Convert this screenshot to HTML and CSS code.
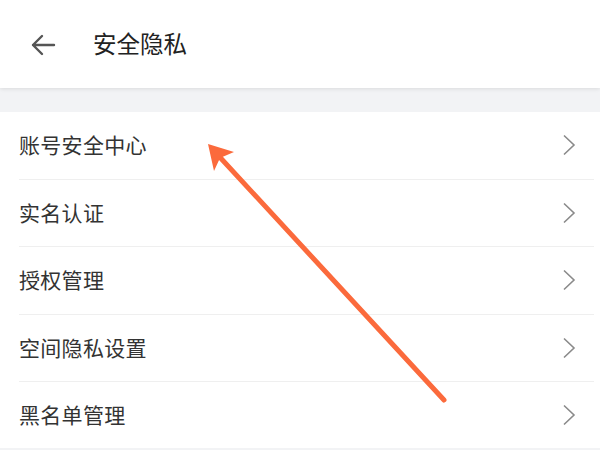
FILE: index.html
```html
<!DOCTYPE html>
<html lang="zh">
<head>
<meta charset="utf-8">
<link rel="stylesheet" href="styles.css">
</head>
<body>
<div class="page">
  <header class="header">
    <svg class="back" width="26" height="24" viewBox="0 0 26 24"><path d="M24 12H3M12 3L3 12l9 9" fill="none" stroke="#555" stroke-width="2.4" stroke-linecap="round" stroke-linejoin="round"/></svg>
    <h1 class="title">安全隐私</h1>
  </header>
  <div class="gap"></div>
  <ul class="list">
    <li class="row"><span class="label">账号安全中心</span><svg class="chev" width="14" height="22" viewBox="0 0 14 22"><path d="M2 1.5l10 9.5-10 9.5" fill="none" stroke="#8a8a8a" stroke-width="1.6"/></svg></li>
    <li class="row"><span class="label">实名认证</span><svg class="chev" width="14" height="22" viewBox="0 0 14 22"><path d="M2 1.5l10 9.5-10 9.5" fill="none" stroke="#8a8a8a" stroke-width="1.6"/></svg></li>
    <li class="row"><span class="label">授权管理</span><svg class="chev" width="14" height="22" viewBox="0 0 14 22"><path d="M2 1.5l10 9.5-10 9.5" fill="none" stroke="#8a8a8a" stroke-width="1.6"/></svg></li>
    <li class="row"><span class="label">空间隐私设置</span><svg class="chev" width="14" height="22" viewBox="0 0 14 22"><path d="M2 1.5l10 9.5-10 9.5" fill="none" stroke="#8a8a8a" stroke-width="1.6"/></svg></li>
    <li class="row"><span class="label">黑名单管理</span><svg class="chev" width="14" height="22" viewBox="0 0 14 22"><path d="M2 1.5l10 9.5-10 9.5" fill="none" stroke="#8a8a8a" stroke-width="1.6"/></svg></li>
  </ul>
  <svg class="pointer" width="600" height="450" viewBox="0 0 600 450">
    <line x1="216" y1="153" x2="444" y2="400" stroke="#fb6a3c" stroke-width="5" stroke-linecap="round"/>
    <polygon points="208,144 234,152 220,158 214,171" fill="#fb6a3c"/>
  </svg>
</div>
</body>
</html>
```
FILE: styles.css
```css
* { box-sizing: border-box; }
html, body { margin: 0; padding: 0; }
body {
  background: #f2f3f5;
  font-family: "Noto Sans CJK SC", "Noto Sans", sans-serif;
}
.page {
  position: relative;
  width: 600px;
  height: 450px;
  overflow: hidden;
  background: #f2f3f5;
}
.header {
  height: 88px;
  background: #fff;
  display: flex;
  align-items: center;
  padding-left: 30px;
  box-shadow: 0 1px 4px rgba(0,0,0,0.10);
  position: relative;
  z-index: 1;
}
.back { display: block; margin-top: 2px; }
.title {
  margin: 0 0 0 37px;
  font-size: 23.5px;
  font-weight: 400;
  color: #222;
  line-height: 1;
}
.gap { height: 24px; }
.list {
  list-style: none;
  margin: 0;
  padding: 0 6px 0 0;
  background: #fff;
}
.row {
  height: 67.5px;
  margin-left: 19px;
  display: flex;
  align-items: center;
  justify-content: space-between;
  padding-right: 18px;
  border-bottom: 1px solid #efefef;
}
.row:last-child { border-bottom: none; height: 66px; }
.label {
  font-size: 21px;
  color: #333;
  letter-spacing: 0.3px;
  margin-top: -2px;
}
.chev { display: block; }
.pointer {
  position: absolute;
  left: 0;
  top: 0;
  z-index: 2;
}
```
